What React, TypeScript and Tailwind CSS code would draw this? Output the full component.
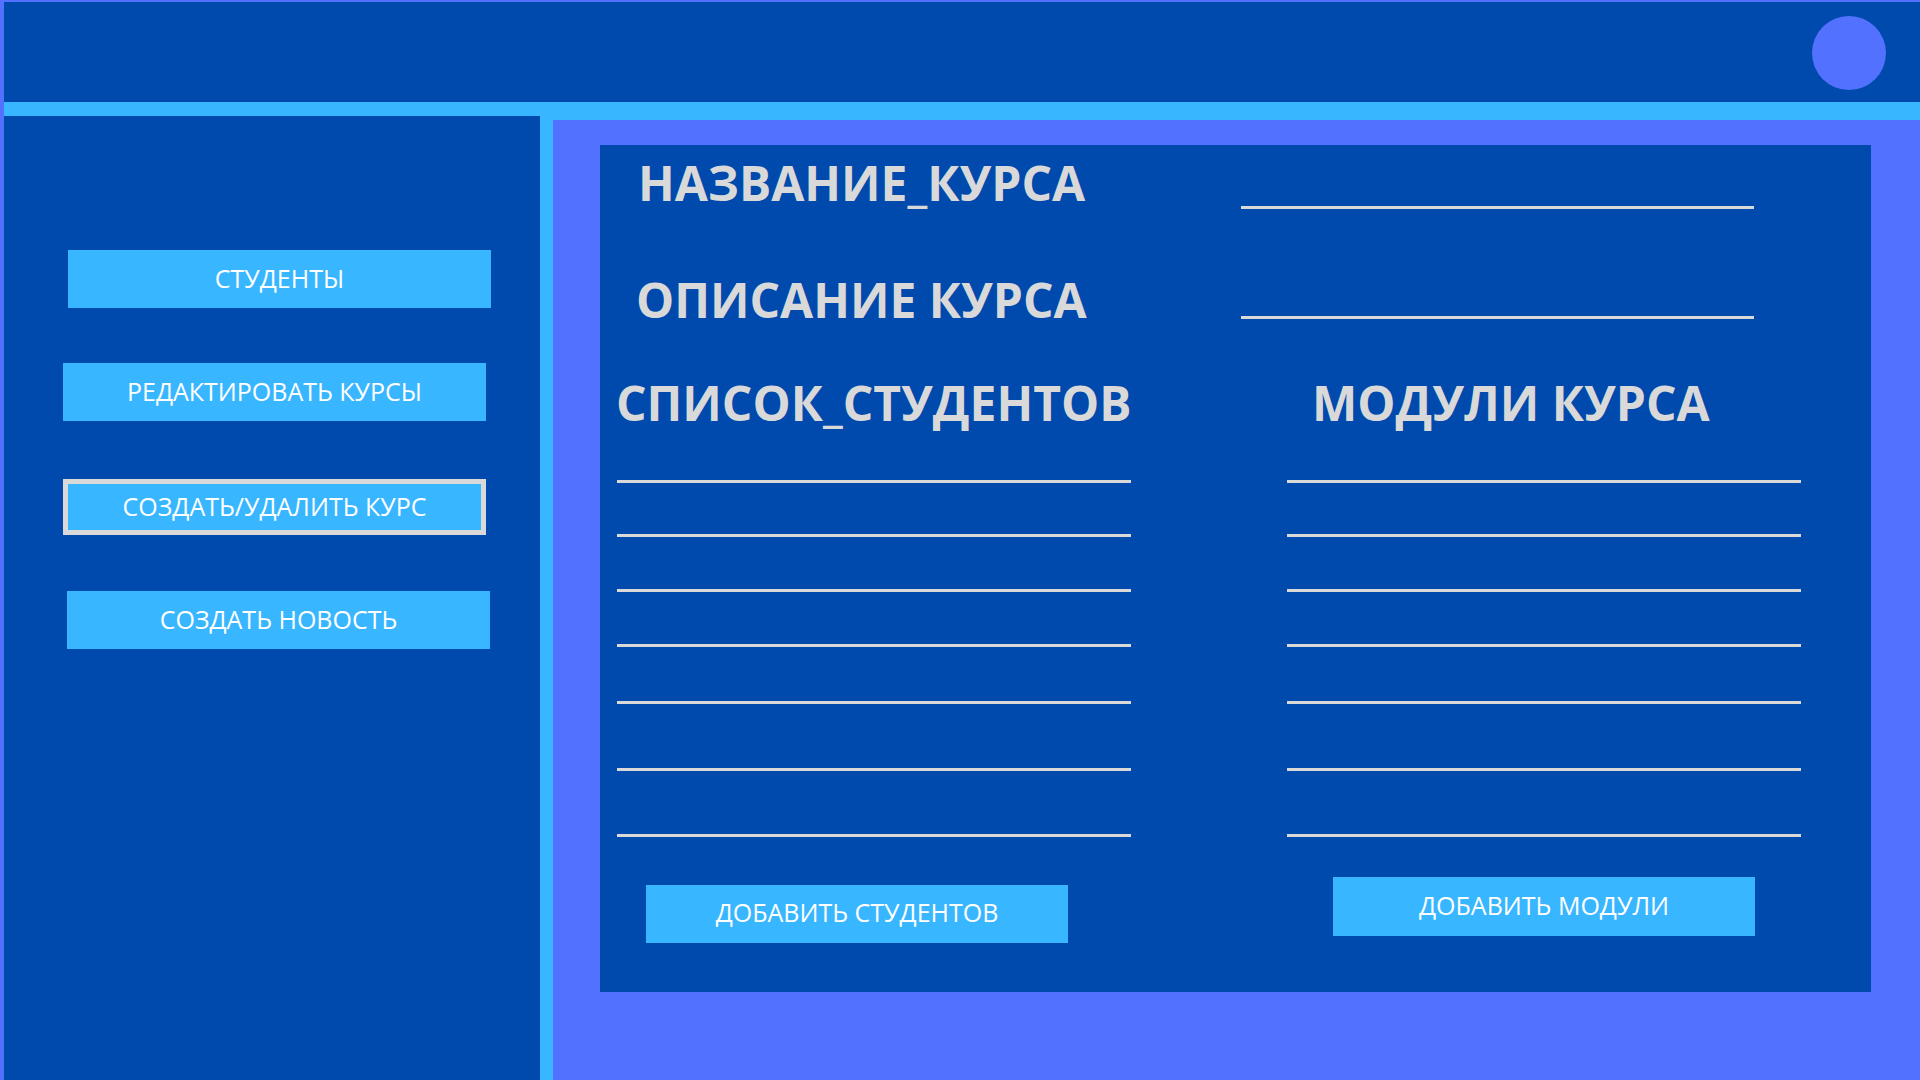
import React from 'react';

const lineGaps = ['mt-[53px]', 'mt-[51px]', 'mt-[52px]', 'mt-[52px]', 'mt-[54px]', 'mt-[64px]', 'mt-[63px]'];

const SideButton: React.FC<{ label: string; className?: string; active?: boolean }> = ({ label, className, active }) => (
  <button
    className={
      'flex w-[423px] items-center justify-center bg-[#38B6FF] pb-[2px] text-[25px] leading-none text-white ' +
      (active ? 'h-[56px] border-[5px] border-[#d9d9d9] ' : 'h-[58px] ') +
      (className ?? '')
    }
  >
    {label}
  </button>
);

const Lines: React.FC = () => (
  <div className="flex flex-col">
    {lineGaps.map((gap, i) => (
      <div key={i} className={gap + ' h-[3px] w-[514px] bg-[#d9d9d9]'} />
    ))}
  </div>
);

export default function App() {
  return (
    <div
      className="flex h-[1080px] w-[1920px] flex-col overflow-hidden bg-[#5271FF] pl-[4px] pt-[2px]"
      style={{ fontFamily: '"Open Sans", "Noto Sans", sans-serif' }}
    >
      {/* top bar */}
      <header className="flex h-[100px] shrink-0 items-start justify-end bg-[#004AAD] pr-[34px] pt-[14px]">
        <div className="h-[74px] w-[74px] rounded-full bg-[#5271FF]" />
      </header>

      <div className="flex min-h-0 flex-1">
        {/* sidebar */}
        <aside className="flex w-[536px] flex-col">
          <div className="h-[14px] bg-[#38B6FF]" />
          <nav className="flex flex-1 flex-col bg-[#004AAD] pt-[134px]">
            <SideButton label="СТУДЕНТЫ" className="ml-[64px]" />
            <SideButton label="РЕДАКТИРОВАТЬ КУРСЫ" className="ml-[59px] mt-[55px]" />
            <SideButton label="СОЗДАТЬ/УДАЛИТЬ КУРС" className="ml-[59px] mt-[58px]" active />
            <SideButton label="СОЗДАТЬ НОВОСТЬ" className="ml-[63px] mt-[56px]" />
          </nav>
        </aside>

        <div className="w-[13px] bg-[#38B6FF]" />

        {/* main */}
        <main className="flex flex-1 flex-col">
          <div className="h-[18px] bg-[#38B6FF]" />
          <div className="flex-1 pl-[47px] pt-[25px]">
            <section className="flex h-[847px] w-[1271px] flex-col bg-[#004AAD] pt-[14px] text-[#d9d9d9]">
              <div className="flex items-start">
                <h2 className="w-[641px] pl-[38px] text-[48px] font-bold leading-none">НАЗВАНИЕ_КУРСА</h2>
                <div className="mt-[47px] h-[3px] w-[513px] bg-[#d9d9d9]" />
              </div>
              <div className="mt-[67px] flex items-start">
                <h2 className="w-[641px] pl-[36px] text-[48px] font-bold leading-none">ОПИСАНИЕ КУРСА</h2>
                <div className="mt-[40px] h-[3px] w-[513px] bg-[#d9d9d9]" />
              </div>

              <div className="mt-[55px] flex gap-[156px] pl-[17px]">
                <div className="flex w-[514px] flex-col">
                  <h2 className="-ml-[1px] text-[48px] font-bold leading-none">СПИСОК_СТУДЕНТОВ</h2>
                  <Lines />
                  <button className="ml-[29px] mt-[48px] flex h-[58px] w-[422px] items-center justify-center bg-[#38B6FF] pb-[3px] text-[25px] leading-none text-white">
                    ДОБАВИТЬ СТУДЕНТОВ
                  </button>
                </div>
                <div className="flex w-[514px] flex-col">
                  <h2 className="pl-[25px] text-[48px] font-bold leading-none">МОДУЛИ КУРСА</h2>
                  <Lines />
                  <button className="ml-[46px] mt-[40px] flex h-[59px] w-[422px] items-center justify-center bg-[#38B6FF] pb-[3px] text-[25px] leading-none text-white">
                    ДОБАВИТЬ МОДУЛИ
                  </button>
                </div>
              </div>
            </section>
          </div>
        </main>
      </div>
    </div>
  );
}
